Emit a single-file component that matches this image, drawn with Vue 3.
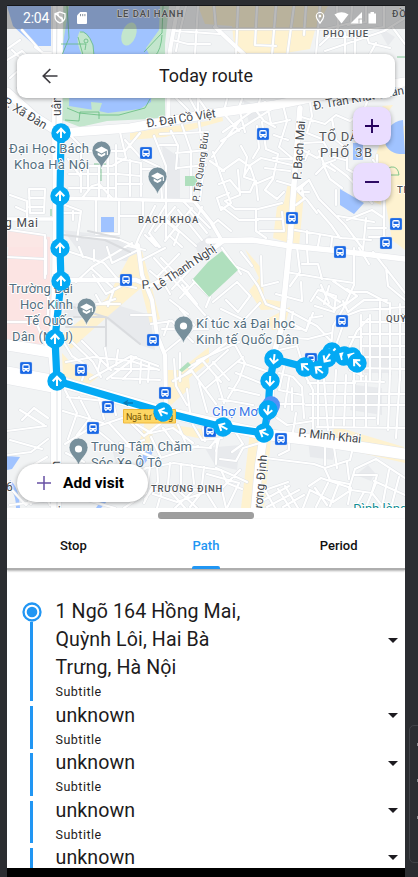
<script setup>
const buses = [[263,134],[146,153],[292,218],[396,224],[386,243],[340,252],[126,280],[342,321],[153,340],[26,368],[81,370],[311,359],[165,393],[108,407],[93,428],[210,431],[281,439]]
const stops = [[61,133,0],[60,196,0],[60,248,0],[61,281,0],[55,339,0],[57,381,0],[163,412,-70],[332,352,225],[223,427,-62],[264,433,-65],[270,381,182],[268,410,187],[274,359,187],[305,367,-50],[319,370,-52],[327,358,215],[344,356,-60],[352,357,-60],[357,363,-45]]
const major = [
  { d: 'M58 6L57 130L58 200L57 290L53 350L56 385L56 508', w: 10 },
  { d: 'M7 92L35 117L60 133L130 128L208 114L275 105L340 92L405 82', w: 9 },
  { d: 'M7 345L50 352M7 372L57 381L165 412L262 434L320 441L405 454', w: 11 },
  { d: 'M7 380L50 388', w: 8 },
  { d: 'M300 108L295 170L290 240L281 330L272 360L271 400L264 434', w: 5.5 },
  { d: 'M264 434L259 465L255 508', w: 8 },
  { d: 'M208 241L252 240L290 246L340 251L405 259', w: 5.5 },
  { d: 'M57 280H136L150 286L190 266L222 242', w: 4.5 },
  { d: 'M138 245L142 275L152 300L157 335L165 355L166 410', w: 4 },
  { d: 'M7 219H53M60 198L194 201L211 222L222 241', w: 3.5 },
  { d: 'M178 6L170 50L168 120M215 27L250 60', w: 4 },
]
const minor = [
  'M7 60L22 51L45 72M10 78L30 60M18 88L39 67M26 94L46 76M7 49L20 40M12 50L35 72L50 88M22 30L31 40L45 56M35 47L43 53L51 53',
  'M172 40L188 44H210M186 6L180 31L176 51M198 6L195 54M176 31L220 34M214 6L216 29H325M238 6L236 55M257 6L255 45L276 46M276 6L272 55M294 6L287 57M306 6L304 35M320 6L316 55M337 6L338 28L320 45M352 6L351 23L325 29M366 6L366 22L348 25M384 6V27L357 31M405 18L384 31L325 51M332 37H350M345 33V55M355 32V54M365 30L369 43L390 48M376 43L370 54M393 28L405 44',
  'M176 98L188 110M190 99L196 110M198 98L207 111M198 99V112M227 99L224 111M242 99L238 110M260 99L258 107M320 99L337 98M370 94L364 110',
  'M70 135L86 151H125L140 133M120 132L126 158L112 166H73M125 140L142 159L159 167M81 151V192M88 165V189M99 167V198M108 151V198M116 145V198M69 188H115M83 197L92 186L99 184L112 198M68 159L81 177M69 174H119M116 158L141 163V196M130 160V196M117 184H142M117 174L141 176M143 169H160L162 198M154 136L166 166V238M171 131L178 146L176 169M182 125L191 151L191 200M199 122L204 166L200 200M176 153L207 150M177 168L206 165M160 134L208 132M160 145H178',
  'M65 205L81 211L77 240M64 213H79M73 211V220M96 200V234H119V202M119 216H143V200M82 237L118 239L137 247M155 206L139 237L135 247M165 206L149 233L160 247M165 221L179 232L174 245M155 231L175 207M165 241L192 208M145 235L156 246M184 202L210 228M167 220L196 246M178 210L202 240M190 212L207 233M150 238L159 247M171 237L182 247M202 207L195 222M212 225L218 220L231 231',
  'M10 195L27 201V219M29 189H45L44 213H30ZM29 198H44M29 207H44M16 207L27 212M10 230L45 235V278M7 257L45 259M46 240V274M48 290V315M7 322H36L48 350',
  'M223 132L265 102M221 141L286 100M212 157L231 132L242 118M225 115L239 131M240 112L245 132M254 108L264 121L275 127M268 109L271 124L290 120M213 152L222 179L231 203L221 210L217 198L229 193M219 184L230 180L240 192H250L255 181L250 166L244 176M222 171L239 159L249 166L261 158L292 165M241 146L247 157L244 177L256 181L258 200M262 122L266 149L278 154L273 179L265 190L277 199L284 192M257 126L259 148L253 158M283 105L287 121L279 147L292 158M274 135L288 140M273 158L292 159M265 168L290 171M238 170L240 195L225 201L235 209H256V231L266 238M222 207L239 220H258M258 209L282 203M257 219H282M260 231H284L282 212M210 161L224 171M253 185L272 177M277 181L291 185',
  'M298 116L325 124L336 115L350 121L365 110M310 102L312 116L307 133L322 139L328 150L317 158L299 148M332 119L336 140L347 149V169L363 178H375L378 200M304 143L322 142M309 151L305 160M319 151L324 164L335 160M330 156L345 160M323 164L330 179L342 188M331 164L347 176L372 203M316 174L325 165L335 171M309 180L298 191L307 200L317 213M295 190L309 180L319 199L345 225L363 249M318 210L331 225L340 238M302 192H309M296 205L304 199L302 187M347 220L372 210L384 218V244M338 216L374 222M368 228H386M369 237H385M366 218L363 250M377 155L377 175M373 160L384 176L384 205M384 205V244M295 230L342 238L371 240M307 231V243M320 235L318 246M332 238L331 248M336 205L336 190',
  'M67 251L104 263L120 282M79 247L83 257M94 250V261M107 247L112 263L138 250M92 267L132 243M76 282L91 268L112 287M93 275L106 294L123 285L136 288M91 304L120 304M96 295L101 304L115 299M114 289L108 306M131 315H155M128 246L145 250M142 260L165 248M154 258L205 315M150 271L163 282L170 294M161 258L188 286L183 290M158 276L179 254M172 289L196 263M180 298L204 272M193 280L210 297L206 307M151 324L172 321L193 342M169 321L164 335M166 351L208 317L219 330M162 329H208M180 309L194 325M170 300L188 314M182 285L197 304',
  'M63 341L72 356L87 366L82 380M72 342L93 362L101 377M82 341L111 370M66 362L93 357L131 361L159 370M90 379L131 356L158 366M107 379L136 357M105 348L108 365M118 350L116 365M131 356V371L123 379M141 362L140 383M149 364L148 382M115 369H157M112 378L160 380M101 358L98 370M174 359L176 386L187 405M180 353V381M184 375L207 357L236 336M173 381L192 371L216 404M189 367L202 360L221 382M197 378L228 350M206 388L243 357M197 361L239 342M213 362L229 380M216 377L224 403M234 343L245 363L239 380L228 398M239 362L266 371M236 373L263 384M229 388L259 395M219 399L253 405M187 389L190 412M199 383L207 412',
  'M212 289L223 279L235 266L248 272L258 286L266 304L284 311M213 302L237 282L250 296L238 312L226 300M222 248L241 274M221 309L244 320L260 303M241 252L252 266M261 256L262 286L278 282M276 294L302 301L301 282M286 272L327 279L354 283M297 247L300 272L290 286M307 248L308 264M302 264H318L322 279M354 248L354 285L343 309L333 326M333 281L349 292H367L388 303M287 310L317 326L330 340M293 312L291 323L306 331L310 318L322 316M311 301L318 290L336 296L334 312L315 306M321 290L340 302M317 297L335 310M321 285L329 303M329 286L324 304M335 309L347 302M373 252L405 293M386 268L388 286L405 300M359 248L369 264M347 289L357 296L345 305M333 326L331 347M342 328L335 348M313 313L306 331M282 337L308 339L331 333M279 350L297 346L302 362M287 328L300 329',
  'M361 322H405M361 334H405M361 346H405M361 315V380M370 315L370 380M380 302V377M390 303V374M400 304V380M348 315L361 310L405 307M350 346L357 331L368 319M361 357H405M361 368L405 369M343 301L348 312L364 300H387M349 337H362M350 370L363 376',
  'M279 373L293 377L302 387L304 418M285 363L279 390L302 395M279 404H304M289 378L285 407M277 418L287 425L313 421M292 388V410M296 413L293 432M306 377L313 390V437M318 375V425M324 379L328 430M336 370L333 426M346 375L344 425M354 373V426M366 376L366 427M380 373L378 424M390 373L388 430M400 375L396 438M308 383H355M310 394H405M306 405H405M310 418H375M317 427L405 428M353 381L384 382',
  'M8 455L31 452L48 439M7 431L46 426M10 440L42 449M20 410L44 425M22 420L34 408L48 418M27 469L47 457M65 390L77 413L68 439M67 397L104 401M79 397L90 418L77 435M98 395L104 419M113 402L116 415M63 411L103 423M65 444L87 430L125 417L144 436L168 418M66 453L84 462M98 431L119 448L144 440M109 423L130 446M136 424L151 433L173 428L193 443M120 443L157 459L198 446M151 437L161 458M163 428L178 448M178 425L187 446L211 448M193 425L202 440L222 438M203 428L205 441',
  'M131 479L146 468L174 463L220 470M150 467L146 493L124 508M157 463L158 482L145 499M170 463L168 484M181 464L181 484M192 465L194 484M204 467L202 485M221 470L227 483L242 489M67 466L90 472L108 466M65 477L77 478M153 485L144 503M155 489L222 490L226 508M153 494L177 502L206 492L216 508M162 490L157 508M170 491L185 508M180 492L197 508M194 490L175 508M205 488L190 507M12 490L26 505L45 484M23 486L31 504M39 485L50 505M10 505L52 500M64 500H87L115 508',
  'M210 447L217 439L216 464M219 439L216 451M220 459L236 461L243 448L260 443M236 433L243 444L232 452M216 468L230 474L247 482M207 474L239 483L227 508M240 470L222 488M265 458L314 464L325 468L350 460L356 435M325 469L330 480L349 484M347 462L349 479M325 444V465M334 447L337 468M289 444L289 450L279 455M349 489L355 469L376 459L405 478M309 486L321 478L351 488L348 504M303 508L310 490L333 502L351 490L372 493L383 507M315 488L327 505M328 483L316 507M338 485L330 506M364 492L355 508M376 483L366 507M389 470L382 508M399 477L391 508M374 481L405 495M275 508L265 490L288 482M278 489L290 508M285 486L298 508M262 501L289 486M267 507L299 490M283 507L304 495M354 475H377L372 492'
]
const rows = [1, 2, 3, 4]
</script>

<template>
  <div class="desktop">
    <div class="phone">
      <section class="map">
        <svg class="canvas" width="398" height="502" viewBox="7 6 398 502">
          <defs>
            <symbol id="bus" viewBox="-7 -7 14 14">
              <rect x="-6.5" y="-6.5" width="13" height="13" rx="2" fill="#1a68e5" stroke="#7caaf0" stroke-width=".6" />
              <path d="M-4 -2.2Q-4 -4.2 -2 -4.2H2Q4 -4.2 4 -2.2V3H3V4.4H1.5V3H-1.5V4.4H-3V3H-4Z" fill="#fff" />
              <path d="M-2.7 -2.6H2.7V.1H-2.7ZM-2.8 1.1H-1.5V2H-2.8ZM1.5 1.1H2.8V2H1.5Z" fill="#1a68e5" />
            </symbol>
            <symbol id="pin" viewBox="-10 -10 20 29">
              <path d="M0 18C-1 11 -9.5 7 -9.5 -.5A9.5 9.5 0 0 1 9.5 -.5C9.5 7 1 11 0 18Z" fill="#78909c" stroke="#fff" stroke-width=".7" />
            </symbol>
            <symbol id="cap" viewBox="-10 -10 20 29">
              <path d="M-6.5 -1L0 -4.6L6.5 -1L0 2.5ZM-3.8 1.6L0 3.7L3.8 1.6V4L0 6L-3.8 4ZM5.3 -.5H6.4V4H5.3Z" fill="#fff" />
            </symbol>
          </defs>
          <rect x="7" y="6" width="398" height="502" fill="#f1f3f4" />

          <!-- districts and campuses -->
          <g fill="#e8eaed">
            <path d="M162 145L180 158V198H166ZM64 317L105 318L140 345L155 350L150 315L107 302L65 304ZM63 230L105 235L138 250V262L84 258ZM243 100L266 109L249 123ZM376 25L395 37L388 46ZM368 465L375 473L371 481L356 475ZM355 385L382 388V415L350 410ZM195 245L210 235L215 244L200 260ZM364 348L390 348V373H364ZM186 210L197 214L191 225Z" />
            <path d="M205 448L240 445L237 470L215 465ZM308 440L335 447L333 460L310 457ZM110 441L125 452L116 464Z" />
          </g>
          <path d="M9 232L50 237V292L53 299L48 350L7 344V276Z" fill="#fce4e3" />
          <path d="M8 229L45 234V247H7Z" fill="#fbe7e5" />

          <!-- commercial blocks -->
          <g fill="#fef2d0">
            <path d="M198 6H328L315 30L310 49L285 53L235 53L232 26L205 24ZM130 133L208 121L222 114L223 121L165 137L130 140ZM385 130L405 126V250L392 240L385 199L372 165ZM288 183L292 184L292 244L273 238L277 207L284 202ZM297 188L304 193L299 247H287ZM129 257L142 251L152 288L160 319L150 323L141 288L107 317L71 349L62 335L107 298ZM245 249L262 269L264 299L284 302L284 309L261 310L249 291L259 278ZM62 353L72 364L98 377L89 384L63 376ZM186 365L209 347V362L184 382ZM167 370H188L190 388L171 405L161 399ZM250 432L271 439L264 508H241ZM147 414L158 418L146 455L138 448ZM173 425L208 430V440L178 434ZM334 426L404 447L405 463L331 446ZM382 106L393 105L388 112ZM267 319L290 307L284 329L272 330ZM372 170L384 157L381 205L374 202Z" />
          </g>

          <!-- lakes -->
          <path d="M62 6H169L165 44L165 117L149 119L107 121L80 127L62 120L59 51Z" fill="#c3e6cd" />
          <path d="M69 6H160L159 30L146 48L153 63L151 102L140 109L108 113L94 110L69 106L70 77L62 50Z" fill="#a0c3ff" />
          <path d="M80 31Q94 35 94 57H83Q74 40 80 31ZM91 102L102 103L99 112L92 113Z" fill="#c3e6cd" />
          <ellipse cx="129" cy="34" rx="7" ry="12" transform="rotate(20 129 34)" fill="#c3e6cd" />
          <path d="M7 6H51V46L35 46L13 26ZM403 120Q386 122 385 143Q389 155 405 154ZM7 456L20 457L12 469L7 470ZM10 480Q19 487 20 508H16Q16 492 8 488ZM145 451L153 447L152 454L142 467L138 465ZM102 499L108 500L101 508H96Z" fill="#a0c3ff" />

          <!-- streets: casing first, surface above it -->
          <g fill="none" stroke-linejoin="round" stroke-linecap="round">
            <path v-for="(d, i) in minor" :key="'c' + i" :d="d" stroke="#dfe2e6" stroke-width="3.2" />
            <path v-for="(r, i) in major" :key="'m' + i" :d="r.d" stroke="#e2e4e8" :stroke-width="r.w + 1" />
            <path v-for="(d, i) in minor" :key="'s' + i" :d="d" stroke="#fff" stroke-width="2.2" />
            <path v-for="(r, i) in major" :key="'r' + i" :d="r.d" stroke="#fff" :stroke-width="r.w" />
            <path d="M57 6L56 128M57 390V508" stroke="#dce0e4" stroke-width=".9" />
            <path d="M64 304L108 318L140 344M74 317H106M106 318V346M66 327H106M64 235L105 240L130 252M88 231L119 238" stroke="#dadcdf" stroke-width="2" />
          </g>

          <!-- parks and ponds -->
          <path d="M193 279L208 262L222 251L238 270L209 297ZM185 176H197V186H185ZM179 370L188 362L191 365L182 372Z" fill="#afdfbd" />
          <path d="M340 189L364 203L354 214L340 205ZM353 143H363V160H353ZM101 217H114V232H101Z" fill="#a0c3ff" />
          <path d="M67 6L69 38L62 55M80 32Q87 30 93 45L94 56M78 37L83 55M61 44H86L85 50M86 39A2 2 0 1 0 86 43A2 2 0 1 0 86 39M163 6L162 33L144 52M162 35Q161 50 155 56M67 108L79 113L99 115L119 115L145 108L150 99M65 120L79 121L80 112L99 112V119M94 164H106M101 159V181M51 209V216M385 170L391 167Q398 166 399 175H388M397 57H405" fill="none" stroke="#5eb879" stroke-width=".75" />

          <svg v-for="(b, i) in buses" :key="'b' + i" :x="b[0] - 6.5" :y="b[1] - 6.5" width="13" height="13"><use href="#bus" /></svg>

          <!-- route line -->
          <path d="M61 133L60 196V248L61 281L55 339L57 381L163 412L223 427L264 433L268 410L270 381L274 359L305 367L319 370L327 358L332 352L345 356L357 363" fill="none" stroke="#03a9f4" stroke-width="7.2" stroke-linejoin="round" />
          <path d="M133 403L124 403M128 400.500L124 403L128 405.500" fill="none" stroke="#087ab5" stroke-width="1.300" />

          <g class="streets">
            <path id="xadan" d="M2 104L48 132" fill="none" />
            <text textLength="49"><textPath href="#xadan">P. Xã Đàn</textPath></text>
            <text transform="translate(61 116) rotate(-90)">uân</text>
            <text transform="translate(147 127.5) rotate(-8.5)" textLength="70">Đ. Đại Cồ Việt</text>
            <text transform="translate(314 110) rotate(-10)" textLength="92">Đ. Trần Khát Chân</text>
            <text transform="translate(301 180) rotate(-86)" textLength="59">P. Bạch Mai</text>
            <text class="tiny" transform="translate(199 202) rotate(-82)" textLength="70">P. Tạ Quang Bửu</text>
            <text x="-10" y="227" textLength="48">ờng Mai</text>
            <text transform="translate(142 289) rotate(-5)">P.</text>
            <text transform="translate(157 291) rotate(-34)" textLength="72">Lê Thanh Nghị</text>
            <text transform="translate(298 436.500) rotate(6)" textLength="63">P. Minh Khai</text>
            <text transform="translate(261 524) rotate(-85)" textLength="69">Trương Định</text>
            <text transform="translate(60 516) rotate(-90)" textLength="55">Đ. Giải Ph</text>
            <text x="6" y="491">6</text>
          </g>
          <g class="district">
            <text x="117" y="17" textLength="67">LE DAI HANH</text>
            <text x="323" y="37" textLength="46">PHO HUE</text>
            <text x="392" y="17">ĐỒNG</text>
            <text class="large" x="319" y="141" textLength="50">TỔ DÂN</text>
            <text class="large" x="320" y="157" textLength="53">PHỐ 3B</text>
            <text x="138" y="223" textLength="61">BACH KHOA</text>
            <text x="386" y="322">QUỲNH</text>
            <text x="397" y="193">TH</text>
            <text x="151" y="492" textLength="72">TRƯƠNG ĐỊNH</text>
          </g>
          <g class="place">
            <text x="9" y="153" textLength="80">Đại Học Bách</text>
            <text x="14" y="168.500" textLength="75">Khoa Hà Nội</text>
            <text x="9" y="293" textLength="64">Trường Đại</text>
            <text x="20" y="309" textLength="53">Học Kinh</text>
            <text x="25" y="325" textLength="48">Tế Quốc</text>
            <text x="12" y="341" textLength="61">Dân (NEU)</text>
            <text x="196" y="328" textLength="99">Kí túc xá Đại học</text>
            <text x="196" y="344" textLength="103">Kinh tế Quốc Dân</text>
            <text x="91" y="451" textLength="101">Trung Tâm Chăm</text>
            <text x="91" y="467" textLength="71">Sóc Xe Ô Tô</text>
            <text class="market" x="212" y="416" textLength="46">Chợ Mơ</text>
            <text class="shrine" x="353" y="513">Đình làng</text>
          </g>
          <svg x="91" y="141" width="21" height="29"><use href="#pin" /><use href="#cap" /></svg>
          <svg x="147" y="167" width="21" height="29"><use href="#pin" /><use href="#cap" /></svg>
          <svg x="76" y="298" width="21" height="29"><use href="#pin" /><use href="#cap" /></svg>
          <svg x="173" y="316" width="21" height="29"><use href="#pin" /></svg>
          <svg x="68" y="438" width="21" height="29"><use href="#pin" /></svg>
          <circle cx="183.5" cy="326" r="3.6" fill="#fff" />
          <circle cx="78.5" cy="449" r="3.6" fill="#fff" />
          <path d="M123.500 409.500H175.500V423H123.500Z" fill="#fdd663" stroke="#f0b93d" />
          <text class="junction" x="126" y="419.500" textLength="47">Ngã tư Vọng</text>
          <path d="M269 423C268 418 262 413 262 405A9 9 0 0 1 280 405C280 413 271 417 269 423" fill="#5491f5" />

          <!-- waypoints -->
          <g v-for="(s, i) in stops" :key="'p' + i" :transform="`translate(${s[0]} ${s[1]}) rotate(${s[2]})`">
            <circle r="9.7" fill="#03a9f4" />
            <path d="M0 5V-4M-4.300 .3L0 -4.200L4.300 .3" fill="none" stroke="#fff" stroke-width="2" />
          </g>
        </svg>

        <div class="statusbar">
          <span class="clock">2:04</span>
          <svg class="shield" width="12" height="13" viewBox="0 0 12 13"><path d="M6 1L11 2.800V6Q11 10 6 12Q1 10 1 6V2.800ZM1.500 2.500L10 10M4 1.800Q3.500 6 7.500 6.500Q9 7 8 10" fill="none" stroke="#fff" stroke-width="1.300" /></svg>
          <svg class="sdcard" width="10" height="12" viewBox="0 0 10 12"><path d="M3.200 0H9Q10 0 10 1V11Q10 12 9 12H1Q0 12 0 11V3.500Z" fill="#fff" /><path d="M3.500 2V4.200M5.700 2V4.200M7.900 2V4.200" stroke="#8b939f" stroke-width="1" /></svg>
          <svg class="radios" width="62" height="14" viewBox="0 0 62 14">
            <path d="M5 1.500A3.700 3.700 0 0 1 8.700 5.200C8.700 7.500 6.500 9.800 5 12.200C3.500 9.800 1.300 7.500 1.300 5.200A3.700 3.700 0 0 1 5 1.500Z" fill="none" stroke="#fff" stroke-width="1.200" /><circle cx="5" cy="5.100" r="1.300" fill="#fff" />
            <path d="M19.500 3.500Q26.500 -1 33.500 3.500L26.500 12.500Z" fill="#fff" />
            <path d="M47 1V12.500H35.500Z" fill="#fff" /><path d="M43.500 8H47M44 8V12.500" stroke="#aaa" stroke-width=".8" />
            <path d="M55.500 1H59V2.500H61V12.500H53.500V2.500H55.500Z" fill="#fff" />
          </svg>
        </div>

        <header class="titlebar">
          <svg class="back" width="16" height="16" viewBox="0 0 16 16"><path d="M15.500 8H1.500M8.300 1L1.300 8L8.300 15" fill="none" stroke="#3d3b40" stroke-width="1.700" /></svg>
          <h1>Today route</h1>
        </header>

        <div class="zoomers">
          <button aria-label="Zoom in"><svg width="14" height="14" viewBox="0 0 14 14"><path d="M0 7H14M7 0V14" stroke="#25005c" stroke-width="1.900" /></svg></button>
          <button aria-label="Zoom out"><svg width="14" height="14" viewBox="0 0 14 14"><path d="M0 7H14" stroke="#25005c" stroke-width="1.900" /></svg></button>
        </div>

        <button class="add">
          <svg width="14" height="14" viewBox="0 0 14 14"><path d="M0 7H14M7 0V14" stroke="#6750a4" stroke-width="1.500" /></svg>
          <span>Add visit</span>
        </button>
      </section>

      <section class="sheet">
        <div class="grip"></div>
        <nav class="tabs">
          <a>Stop</a>
          <a class="active">Path</a>
          <a>Period</a>
        </nav>
        <ul class="timeline">
          <li class="first">
            <div class="rail"><svg class="origin" width="20" height="20" viewBox="0 0 20 20"><circle cx="10" cy="10" r="8.500" fill="#fff" stroke="#2196f3" stroke-width="2.300" /><circle cx="10" cy="10" r="5.300" fill="#2196f3" /></svg><i></i></div>
            <div class="info"><p class="name">1 Ngõ 164 Hồng Mai,<br />Quỳnh Lôi, Hai Bà<br />Trưng, Hà Nội</p><p class="sub">Subtitle</p></div>
            <b class="caret"></b>
          </li>
          <li v-for="r in rows" :key="r">
            <div class="rail"><i></i></div>
            <div class="info"><p class="name">unknown</p><p class="sub">Subtitle</p></div>
            <b class="caret"></b>
          </li>
        </ul>
      </section>
      <div class="navstrip"></div>
    </div>
    <aside class="tools"><i></i><i></i><i></i></aside>
  </div>
</template>

<style>
body { background: #2b2d31; overflow: hidden; }
</style>

<style scoped>
.desktop { position: relative; width: 418px; height: 877px; box-sizing: border-box; padding: 5px 0 0 7px; overflow: hidden; background: #2b2d31; font-family: Roboto, sans-serif; }
.phone { width: 398px; height: 872px; border-top: 1px solid #151619; box-sizing: border-box; display: flex; flex-direction: column; }
.map { position: relative; height: 502px; flex: none; overflow: hidden; }
.canvas { display: block; }
.canvas text { paint-order: stroke; stroke: #fff; stroke-width: 1.8px; stroke-linejoin: round; }
.streets text { font-size: 12px; fill: #45494e; }
.streets .tiny { font-size: 9.5px; }
.district text { font-size: 9.500px; font-weight: 500; letter-spacing: .8px; fill: #505459; stroke-width: 1.3px; }
.district .large { font-size: 13px; font-weight: 400; }
.place text { font-size: 13px; fill: #557080; }
.canvas .market { fill: #3b78e7; }
.canvas .shrine { fill: #128e94; }
.canvas .junction { font-size: 9px; fill: #755500; stroke: none; }
.statusbar { position: absolute; inset: 0 0 auto; height: 23px; background: rgba(65, 65, 65, .36); display: flex; align-items: center; padding: 0 28px 0 16px; box-sizing: border-box; color: #fff; }
.clock { font-size: 14px; width: 31px; letter-spacing: -.2px; }
.shield { margin-right: 11px; }
.radios { margin-left: auto; }
.titlebar { position: absolute; left: 10px; right: 10px; top: 48px; height: 44px; background: #fff; border-radius: 9px; box-shadow: 0 1px 4px rgba(0, 0, 0, .35); display: flex; align-items: center; }
.back { margin-left: 25px; }
.titlebar h1 { flex: 1; margin: 0 41px 2px 0; text-align: center; font-size: 17.900px; font-weight: 400; color: #1d1b20; }
.zoomers { position: absolute; right: 14px; top: 101px; display: grid; gap: 18px; }
.zoomers button { width: 38px; height: 38px; padding: 0; border: 0; border-radius: 10px; background: #eaddff; display: grid; place-items: center; box-shadow: 0 2px 5px rgba(0, 0, 0, .32); }
.add { position: absolute; left: 10px; bottom: 6px; width: 131px; height: 38px; padding: 0 0 0 20px; border: 0; border-radius: 19px; background: #fff; box-shadow: 0 1px 4px rgba(0, 0, 0, .35); display: flex; align-items: center; gap: 12px; font: 700 15.500px Roboto, sans-serif; color: #000; }
.sheet { height: 360px; flex: none; background: #fff; overflow: hidden; display: flex; flex-direction: column; }
.grip { width: 96px; height: 7px; flex: none; border-radius: 3px; background: #9e9e9e; margin: 4px 0 0 151px; }
.tabs { display: grid; grid-template-columns: repeat(3, 1fr); height: 49px; flex: none; border-bottom: 2px solid #aeaeae; box-shadow: 0 1px 2px rgba(0, 0, 0, .3); }
.tabs a { position: relative; text-align: center; padding-top: 19px; font-size: 13px; line-height: 16px; font-weight: 500; color: #111; }
.tabs .active { color: #2196f3; }
.tabs .active::after { content: ""; position: absolute; left: 52px; bottom: -1px; width: 28px; height: 3px; border-radius: 2px 2px 0 0; background: #2196f3; }
.timeline { flex: none; list-style: none; margin: 27px 0 0; padding: 0; color: #1d1b20; }
.timeline li { display: flex; height: 47.400px; box-sizing: border-box; padding: 0 7px 0 14px; align-items: flex-start; }
.timeline .first { height: 104px; }
.rail { width: 21px; display: flex; flex-direction: column; align-items: center; padding: 5px 0 0; }
.rail i { width: 3px; height: 42.500px; flex: none; background: #2196f3; }
.first .rail { padding-top: 4.700px; }
.first .rail i { height: 79px; }
.origin { flex: none; }
.info { flex: 1; margin-left: 13.500px; padding-top: .8px; }
.name, .sub { margin: 0; }
.name { font-size: 19.600px; line-height: 28px; letter-spacing: .1px; }
.sub { font-size: 12.500px; line-height: 20px; letter-spacing: .5px; }
.caret { width: 0; height: 0; border: 5px solid transparent; border-top-color: #1d1b20; border-bottom: 0; margin-top: 12.300px; }
.first .caret { margin-top: 41px; }
.navstrip { height: 9px; flex: none; background: #000; }
.tools { position: absolute; left: 409px; top: 725px; width: 20px; height: 138px; border: 1px solid #414348; border-radius: 5px; display: grid; justify-content: start; padding: 17px 0 10px 7px; box-sizing: border-box; }
.tools i { width: 1px; height: 3px; background: #85878b; }
</style>
